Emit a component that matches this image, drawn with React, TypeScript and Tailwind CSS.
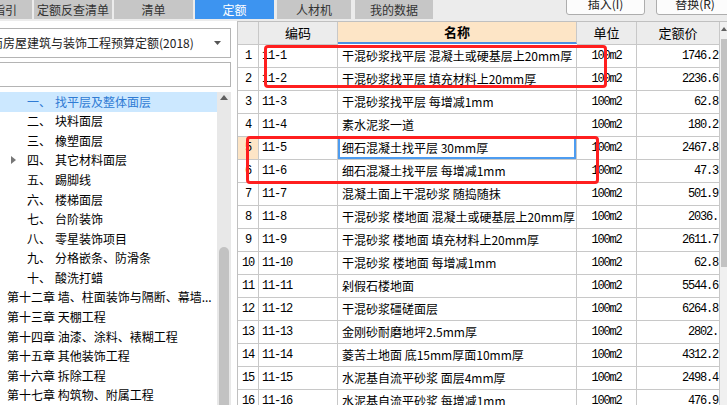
import React from 'react';

const cjk = "font-['Noto_Sans_CJK_SC','Noto_Sans',sans-serif]";
const mono = "font-['Liberation_Mono','Noto_Sans_CJK_SC',monospace] tracking-[-1.2px]";

const tabs = [
  { label: '清单指引', cls: 'w-[78px] -ml-[46px]' },
  { label: '定额反查清单', cls: 'w-[78px] ml-[2px]' },
  { label: '清单', cls: 'w-[79px] ml-[2px]' },
  { label: '定额', cls: 'w-[79px] ml-[2px]', active: true },
  { label: '人材机', cls: 'w-[74px] ml-[3px]' },
  { label: '我的数据', cls: 'w-[78px] ml-[4px]' },
];

const sections = [
  { no: '一、', text: '找平层及整体面层', selected: true },
  { no: '二、', text: '块料面层' },
  { no: '三、', text: '橡塑面层' },
  { no: '四、', text: '其它材料面层', arrow: true },
  { no: '五、', text: '踢脚线' },
  { no: '六、', text: '楼梯面层' },
  { no: '七、', text: '台阶装饰' },
  { no: '八、', text: '零星装饰项目' },
  { no: '九、', text: '分格嵌条、防滑条' },
  { no: '十、', text: '酸洗打蜡' },
];

const chapters = [
  '第十二章 墙、柱面装饰与隔断、幕墙...',
  '第十三章 天棚工程',
  '第十四章 油漆、涂料、裱糊工程',
  '第十五章 其他装饰工程',
  '第十六章 拆除工程',
  '第十七章 构筑物、附属工程',
];

const rows = [
  ['11-1', '干混砂浆找平层 混凝土或硬基层上20mm厚', '1746.2'],
  ['11-2', '干混砂浆找平层 填充材料上20mm厚', '2236.6'],
  ['11-3', '干混砂浆找平层 每增减1mm', '62.8'],
  ['11-4', '素水泥浆一道', '180.2'],
  ['11-5', '细石混凝土找平层 30mm厚', '2467.8'],
  ['11-6', '细石混凝土找平层 每增减1mm', '47.3'],
  ['11-7', '混凝土面上干混砂浆 随捣随抹', '501.9'],
  ['11-8', '干混砂浆 楼地面 混凝土或硬基层上20mm厚', '2036.'],
  ['11-9', '干混砂浆 楼地面 填充材料上20mm厚', '2611.7'],
  ['11-10', '干混砂浆 楼地面 每增减1mm', '62.8'],
  ['11-11', '剁假石楼地面', '5544.6'],
  ['11-12', '干混砂浆礓磋面层', '6264.8'],
  ['11-13', '金刚砂耐磨地坪2.5mm厚', '2802.'],
  ['11-14', '菱苦土地面 底15mm厚面10mm厚', '4312.2'],
  ['11-15', '水泥基自流平砂浆 面层4mm厚', '2498.4'],
  ['11-16', '水泥基自流平砂浆 每增减1mm', '476.9'],
];

const cell = 'h-[23px] border-r border-b border-[#c8c8c8] flex items-center overflow-hidden whitespace-nowrap';

export default function App() {
  return (
    <div className={`relative w-[727px] h-[405px] overflow-hidden bg-white flex flex-col text-[12px] text-black ${cjk}`}>
      {/* top tabs + buttons */}
      <div className="h-[21px] bg-[#ececec] flex items-start shrink-0">
        {tabs.map((t) => (
          <div
            key={t.label}
            className={`${t.cls} h-[19px] shrink-0 flex items-center justify-center text-[12px] leading-none ${
              t.active ? 'bg-[#3d94f0] text-white' : 'bg-[#c6c6c6] text-[#333]'
            }`}
          >
            {t.label}
          </div>
        ))}
        <div className="flex-1" />
        <div className="w-[79px] h-[22px] -mt-[7px] shrink-0 bg-[#fcfcfc] border border-[#adadad] rounded-[3px] flex items-center justify-center text-[12px] text-[#222]">
          插入(I)
        </div>
        <div className="w-[78px] h-[22px] -mt-[7px] ml-[11px] -mr-[7px] shrink-0 bg-[#fcfcfc] border border-[#adadad] rounded-[3px] flex items-center justify-center text-[12px] text-[#222]">
          替换(R)
        </div>
      </div>

      <div className="flex flex-1 min-h-0">
        {/* left panel */}
        <div className="w-[237px] shrink-0 flex flex-col overflow-hidden">
          <div className="mt-[7px] -ml-[30px] w-[261px] h-[30px] border border-[#b4b4b4] flex items-center pl-[8px] pr-[9px] shrink-0">
            <span className="flex-1 whitespace-nowrap text-[12px] text-[#222]">湖南房屋建筑与装饰工程预算定额(2018)</span>
            <svg width="7" height="4" viewBox="0 0 7 4" className="shrink-0">
              <path d="M0 0H7L3.5 4Z" fill="#555" />
            </svg>
          </div>
          <div className="mt-[4px] -ml-[30px] w-[261px] h-[25px] border border-[#b4b4b4] shrink-0" />
          <div className="mt-[5px] flex flex-1 min-h-0">
            <div className="w-[217px] shrink-0 flex flex-col">
              {sections.map((s) => (
                <div
                  key={s.no}
                  className={`h-[20px] flex items-center whitespace-nowrap ${s.selected ? 'bg-[#cce8ff] text-[#2f7bd4]' : ''}`}
                >
                  <span className="w-[27px] shrink-0 flex items-center pl-[11px]">
                    {s.arrow && (
                      <svg width="5" height="8" viewBox="0 0 5 8">
                        <path d="M0 0L5 4L0 8Z" fill="#777" />
                      </svg>
                    )}
                  </span>
                  <span className="w-[28px] shrink-0">{s.no}</span>
                  <span>{s.text}</span>
                </div>
              ))}
              {chapters.map((c) => (
                <div key={c} className="h-[20px] flex items-center pl-[7px] whitespace-nowrap">
                  {c}
                </div>
              ))}
            </div>
            <div className="w-[14px] shrink-0 bg-[#e8e8e8] flex flex-col items-center">
              <svg width="8" height="5" viewBox="0 0 8 5" className="mt-[3px]">
                <path d="M0 5L4 0L8 5Z" fill="#606060" />
              </svg>
              <div className="mt-[147px] w-[10px] flex-1 bg-[#c2c2c2] rounded-t-[5px]" />
            </div>
          </div>
        </div>

        {/* grid */}
        <div className="flex-1 flex border-l border-t border-[#c0c0c0] min-w-0">
          <div className="flex flex-col">
            <div className="grid grid-cols-[21px_79px_239px_60px_83px] text-[13px]">
              <div className={`${cell} bg-[#ececec] h-[22px]`} />
              <div className={`${cell} bg-[#ececec] h-[22px] justify-center`}>编码</div>
              <div className="h-[22px] border-r border-b-2 border-r-[#c8c8c8] border-b-[#4a90e2] bg-[#fde5c6] flex items-center justify-center font-bold">
                名称
              </div>
              <div className={`${cell} bg-[#ececec] h-[22px] justify-center`}>单位</div>
              <div className={`${cell} bg-[#ececec] h-[22px] justify-center`}>定额价</div>
            </div>
            {rows.map(([code, name, price], i) => {
              const sel = i === 4;
              return (
                <div key={code} className="grid grid-cols-[21px_79px_239px_60px_83px] text-[12px]">
                  <div className={`${cell} justify-center ${mono} ${sel ? 'bg-[#fde5c6]' : ''}`}>{i + 1}</div>
                  <div className={`${cell} pl-[3px] ${mono}`}>{code}</div>
                  <div className={`${cell} pl-[4px] ${sel ? 'shadow-[inset_0_0_0_2px_#4d9cf0]' : ''}`}>{name}</div>
                  <div className={`${cell} justify-center ${mono}`}>100m2</div>
                  <div className={`${cell} justify-end pr-[1px] ${mono}`}>{price}</div>
                </div>
              );
            })}
          </div>
          <div className="w-[7px] shrink-0 bg-[#f0f0f0] flex flex-col items-end">
            <svg width="6" height="4" viewBox="0 0 6 4" className="mt-[5px]">
              <path d="M0 4L3 0L6 4Z" fill="#606060" />
            </svg>
            <div className="mt-[8px] w-[6px] h-[228px] bg-[#c2c2c2]" />
          </div>
        </div>
      </div>

      {/* red annotation boxes */}
      <div className="absolute left-[264px] top-[45px] w-[343px] h-[43px] border-[3px] border-[#ff1f1f] rounded-[4px]" />
      <div className="absolute left-[246px] top-[136px] w-[353px] h-[48px] border-[3px] border-[#ff1f1f] rounded-[4px]" />
    </div>
  );
}
